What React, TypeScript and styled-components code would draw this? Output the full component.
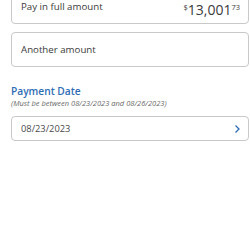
import React from "react";
import styled, { createGlobalStyle } from "styled-components";

const GlobalStyle = createGlobalStyle`
  html, body {
    margin: 0;
    padding: 0;
    background: #ffffff;
    font-family: "Open Sans", "Noto Sans", sans-serif;
  }
`;

const Page = styled.div`
  width: 250px;
  height: 250px;
  overflow: hidden;
  background: #fff;
`;

const Content = styled.div`
  display: flex;
  flex-direction: column;
  margin-top: -11px;
  padding: 0 1px 0 11px;
`;

const Option = styled.div<{ $gap?: number }>`
  display: flex;
  align-items: center;
  justify-content: space-between;
  box-sizing: border-box;
  height: 35px;
  padding: 0 8px 0 9px;
  border: 1px solid #c9c9c9;
  border-radius: 4px;
  margin-bottom: ${(p) => p.$gap ?? 0}px;
  color: #3a3a3a;
  font-size: 9.7px;
`;

const Amount = styled.span`
  font-size: 14px;
  color: #3a3a3a;
  display: flex;
  align-items: flex-start;
  line-height: 1;
  margin-top: 6px;
`;

const Sup = styled.span`
  font-size: 7.5px;
  margin-top: 1px;
`;

const Label = styled.div`
  margin-top: 17px;
  color: #2e6db4;
  font-size: 10.2px;
  font-weight: 600;
  line-height: 14px;
`;

const Hint = styled.div`
  color: #6a6a6a;
  font-size: 7.5px;
  font-style: italic;
  line-height: 10px;
  margin-bottom: 8px;
`;

const DateField = styled.div`
  display: flex;
  align-items: center;
  justify-content: space-between;
  box-sizing: border-box;
  height: 25px;
  padding: 0 7px 0 9px;
  border: 1px solid #c9c9c9;
  border-radius: 4px;
  color: #4a4a4a;
  font-size: 9.3px;
`;

export default function App() {
  return (
    <Page>
      <GlobalStyle />
      <Content>
        <Option $gap={8}>
          <span>Pay in full amount</span>
          <Amount>
            <Sup>$</Sup>13,001<Sup>73</Sup>
          </Amount>
        </Option>
        <Option>
          <span>Another amount</span>
        </Option>
        <Label>Payment Date</Label>
        <Hint>(Must be between 08/23/2023 and 08/26/2023)</Hint>
        <DateField>
          <span>08/23/2023</span>
          <svg width="8" height="10" viewBox="0 0 8 10">
            <path d="M2.5 1.5 L6 5 L2.5 8.5" fill="none" stroke="#2e6db4" strokeWidth="1.3" />
          </svg>
        </DateField>
      </Content>
    </Page>
  );
}
